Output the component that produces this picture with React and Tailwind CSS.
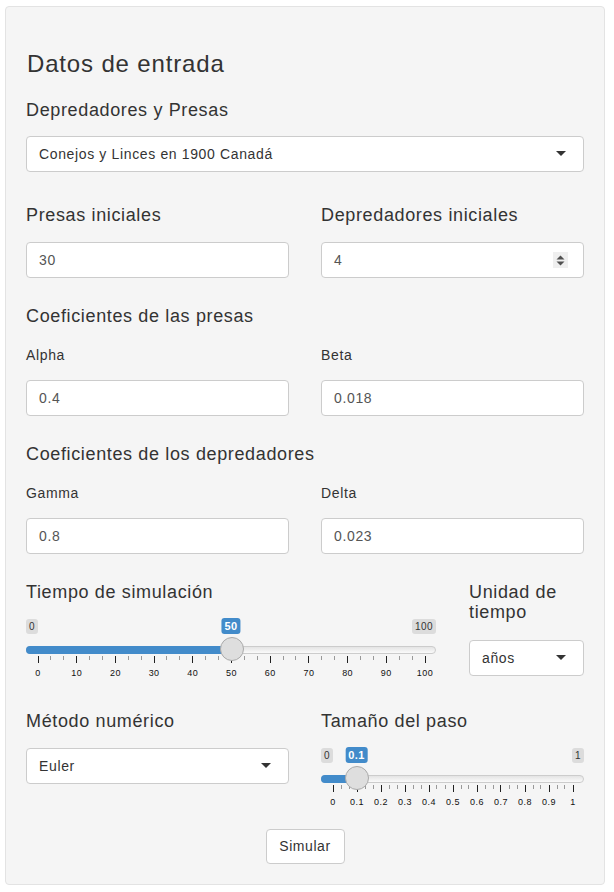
import React from 'react';

const font = { fontFamily: '"Liberation Sans", Arial, sans-serif' };

function Caret() {
    return (
        <span className="absolute right-[17px] top-1/2 -mt-[3px] w-0 h-0 border-t-[5px] border-x-[5px] border-t-[#333] border-x-transparent" />
    );
}

function Select({ value, className = '' }) {
    return (
        <div className={`relative h-[36px] bg-white border border-[#ccc] rounded-[4px] flex items-center pl-[12px] text-[14px] text-[#333] ${className}`}>
            {value}
            <Caret />
        </div>
    );
}

function TextInput({ value, spinner }) {
    return (
        <div className="relative h-[36px] bg-white border border-[#ccc] rounded-[4px] flex items-center pl-[12px] text-[14px] text-[#555]">
            {value}
            {spinner && (
                <span className="absolute right-[15px] top-[9px] w-[15px] h-[16px] bg-[#efefef] flex items-center justify-center">
                    <svg width="9" height="11" viewBox="0 0 9 11">
                        <path d="M4.5 0.5 L8.5 4.5 L0.5 4.5 Z" fill="#505050" />
                        <path d="M0.5 6.5 L8.5 6.5 L4.5 10.5 Z" fill="#505050" />
                    </svg>
                </span>
            )}
        </div>
    );
}

function Label({ children, small }) {
    return small
        ? <div className="text-[14px] leading-[20px] text-[#333]">{children}</div>
        : <div className="text-[18px] leading-[20px] text-[#333]">{children}</div>;
}

function Slider({ min, max, value, labels, fmt }) {
    const p = (value - min) / (max - min);
    const pos = (f) => `calc(11.5px + ${f} * (100% - 23px))`;
    const n = labels.length - 1;
    const minor = [];
    for (let i = 0; i < n; i++) {
        minor.push((i + 1 / 3) / n, (i + 2 / 3) / n);
    }
    return (
        <div className="relative h-[66px] mt-[10px] tracking-normal">
            <span className="absolute left-0 top-[7px] px-[3px] text-[10px] leading-[13px] py-[1px] bg-black/10 rounded-[3px] text-[#333] tracking-[0.04em]">{fmt(min)}</span>
            <span className="absolute right-0 top-[7px] px-[3px] text-[10px] leading-[13px] py-[1px] bg-black/10 rounded-[3px] text-[#333] tracking-[0.04em]">{fmt(max)}</span>
            <span
                className="absolute top-[6px] -translate-x-1/2 px-[3px] text-[11px] leading-[14px] py-[1px] bg-[#428bca] rounded-[3px] text-white tracking-[0.04em] font-semibold"
                style={{ left: pos(p) }}
            >
                {fmt(value)}
            </span>
            <div className="absolute left-0 right-0 top-[34px] h-[8px] rounded-full border border-[#ccc] bg-gradient-to-b from-[#e4e4e4] to-[#fafafa]" />
            <div
                className="absolute left-0 top-[34px] h-[8px] rounded-l-full bg-[#428bca]"
                style={{ width: pos(p) }}
            />
            {labels.map((l, i) => (
                <React.Fragment key={i}>
                    <span className="absolute top-[44px] w-[1px] h-[7px] bg-[#222]" style={{ left: pos(i / n) }} />
                    <span
                        className="absolute top-[56px] -translate-x-1/2 text-[9px] leading-[10px] text-[#111] tracking-[0.05em]"
                        style={{ left: `calc(${pos(i / n)} + 0.5px)` }}
                    >
                        {l}
                    </span>
                </React.Fragment>
            ))}
            {minor.map((f, i) => (
                <span key={i} className="absolute top-[44px] w-[1px] h-[4px] bg-[#999]" style={{ left: pos(f) }} />
            ))}
            <span
                className="absolute top-[25px] w-[24px] h-[24px] -ml-[11.5px] rounded-full bg-[#dedede] border border-[#aaa]"
                style={{ left: pos(p) }}
            />
        </div>
    );
}

export default function App() {
    const tiempo = ['0', '10', '20', '30', '40', '50', '60', '70', '80', '90', '100'];
    const paso = ['0', '0.1', '0.2', '0.3', '0.4', '0.5', '0.6', '0.7', '0.8', '0.9', '1'];

    return (
        <div className="bg-white min-h-[892px] pt-[6px]" style={font}>
            <div className="ml-[5px] w-[600px] bg-[#f5f5f5] border border-[#e3e3e3] rounded-[4px] pt-[44px] pb-[20px] px-[20px] text-[#333] tracking-[0.04em]">
                <h3 className="text-[24px] leading-[26px] pl-[1px] tracking-[0.035em]">Datos de entrada</h3>

                <div className="mt-[23px]"><Label>Depredadores y Presas</Label></div>
                <Select value="Conejos y Linces en 1900 Canadá" className="mt-[16px]" />

                <div className="grid grid-cols-2 gap-x-[32px] mt-[33px]">
                    <div>
                        <Label>Presas iniciales</Label>
                        <div className="mt-[17px]"><TextInput value="30" /></div>
                    </div>
                    <div>
                        <Label>Depredadores iniciales</Label>
                        <div className="mt-[17px]"><TextInput value="4" spinner /></div>
                    </div>
                </div>

                <div className="mt-[28px]"><Label>Coeficientes de las presas</Label></div>
                <div className="grid grid-cols-2 gap-x-[32px] mt-[19px]">
                    <div>
                        <Label small>Alpha</Label>
                        <div className="mt-[15px]"><TextInput value="0.4" /></div>
                    </div>
                    <div>
                        <Label small>Beta</Label>
                        <div className="mt-[15px]"><TextInput value="0.018" /></div>
                    </div>
                </div>

                <div className="mt-[28px]"><Label>Coeficientes de los depredadores</Label></div>
                <div className="grid grid-cols-2 gap-x-[32px] mt-[19px]">
                    <div>
                        <Label small>Gamma</Label>
                        <div className="mt-[15px]"><TextInput value="0.8" /></div>
                    </div>
                    <div>
                        <Label small>Delta</Label>
                        <div className="mt-[15px]"><TextInput value="0.023" /></div>
                    </div>
                </div>

                <div className="flex gap-x-[33px] mt-[28px]">
                    <div className="w-[410px]">
                        <Label>Tiempo de simulación</Label>
                        <Slider min={0} max={100} value={50} labels={tiempo} fmt={(v) => String(v)} />
                    </div>
                    <div className="flex-1">
                        <Label>Unidad de<br />tiempo</Label>
                        <Select value="años" className="mt-[18px]" />
                    </div>
                </div>

                <div className="grid grid-cols-2 gap-x-[32px] mt-[33px]">
                    <div>
                        <Label>Método numérico</Label>
                        <Select value="Euler" className="mt-[17px]" />
                    </div>
                    <div>
                        <Label>Tamaño del paso</Label>
                        <Slider min={0} max={1} value={0.1} labels={paso} fmt={(v) => String(v)} />
                    </div>
                </div>

                <div className="flex justify-center mt-[22px]">
                    <button className="h-[35px] w-[79px] bg-white border border-[#ccc] rounded-[4px] text-[14px] text-[#333] tracking-[0.04em]">
                        Simular
                    </button>
                </div>
            </div>
        </div>
    );
}
